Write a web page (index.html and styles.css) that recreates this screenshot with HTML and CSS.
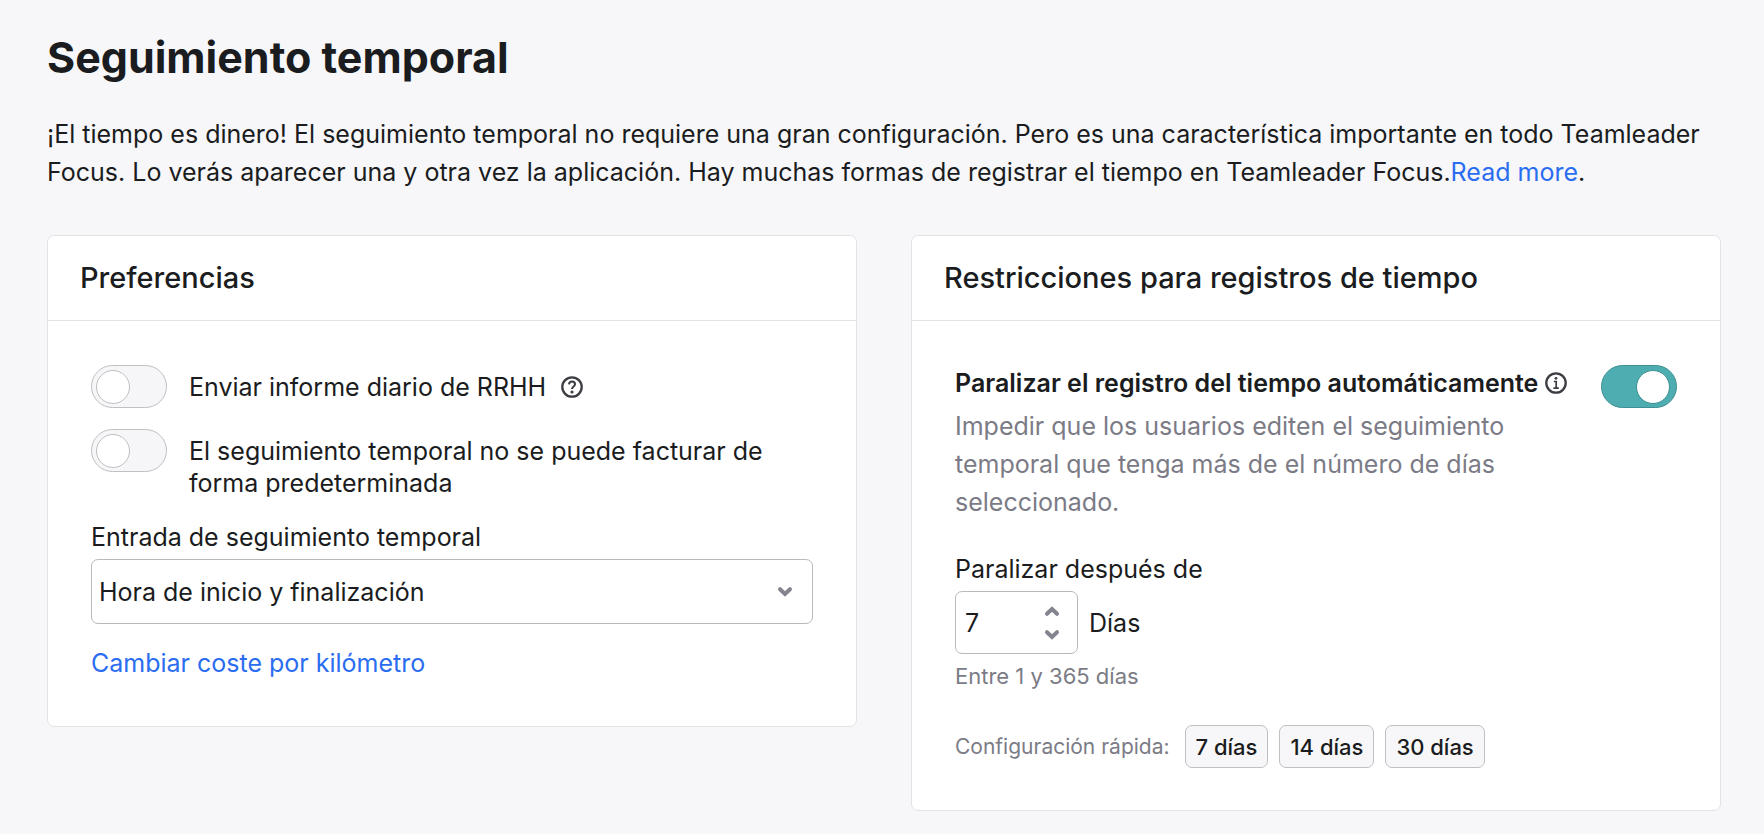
FILE: index.html
```html
<!DOCTYPE html>
<html lang="es">
<head>
	<meta charset="utf-8">
	<meta name="viewport" content="width=device-width, initial-scale=1">
	<title>Seguimiento temporal</title>
	<link rel="stylesheet" href="styles.css">
</head>
<body>
	<h1>Seguimiento temporal</h1>
	<p class="intro">¡El tiempo es dinero! El seguimiento temporal no requiere una gran configuración. Pero es una característica importante en todo Teamleader Focus. Lo verás aparecer una y otra vez la aplicación. Hay muchas formas de registrar el tiempo en Teamleader Focus.<a href="#">Read more</a>.</p>

	<main class="cards">
		<section class="card">
			<h2>Preferencias</h2>
			<div class="card-body">
				<div class="option">
					<input type="checkbox" class="toggle" id="report">
					<label for="report">Enviar informe diario de RRHH</label>
					<svg class="icon" viewBox="0 0 22 22" fill="none" stroke="currentColor" stroke-width="2.3">
						<circle cx="11" cy="11" r="9.7"/>
						<path d="M8 8.4C8.2 6.5 9.4 5.6 11 5.6c1.8 0 3 1 3 2.6 0 2.2-3 2.4-3 4.9" stroke-width="2"/>
						<circle cx="11" cy="16" r="1.6" fill="currentColor" stroke="none"/>
					</svg>
				</div>
				<div class="option">
					<input type="checkbox" class="toggle" id="billable">
					<label for="billable">El seguimiento temporal no se puede facturar de forma predeterminada</label>
				</div>

				<label class="field-label" for="entry">Entrada de seguimiento temporal</label>
				<div class="select">
					<select id="entry">
						<option>Hora de inicio y finalización</option>
						<option>Duración</option>
					</select>
					<svg class="chevron" viewBox="0 0 14 10"><path d="M2 2.2l5 4.8 5-4.8"/></svg>
				</div>

				<a class="cost-link" href="#">Cambiar coste por kilómetro</a>
			</div>
		</section>

		<section class="card">
			<h2>Restricciones para registros de tiempo</h2>
			<div class="card-body">
				<div class="lock">
					<div class="lock-text">
						<div class="lock-title">
							<label for="lock">Paralizar el registro del tiempo automáticamente</label>
							<svg class="icon" viewBox="0 0 22 22" fill="none" stroke="currentColor" stroke-width="2.3">
								<circle cx="11" cy="11" r="9.7"/>
								<path d="M8.8 9.5h2.4v6.6M8.4 16.2h5.4" stroke-width="1.7"/>
								<circle cx="11" cy="6.3" r="1.4" fill="currentColor" stroke="none"/>
							</svg>
						</div>
						<p>Impedir que los usuarios editen el seguimiento temporal que tenga más de el número de días seleccionado.</p>
					</div>
					<input type="checkbox" class="toggle" id="lock" checked>
				</div>

				<label class="field-label" for="days">Paralizar después de</label>
				<div class="days">
					<div class="number">
						<input type="number" id="days" value="7" min="1" max="365">
						<div class="steps">
							<button type="button" aria-label="Aumentar" onclick="days.stepUp()"><svg class="chevron" viewBox="0 0 14 10"><path d="M2 7.8L7 3l5 4.8"/></svg></button>
							<button type="button" aria-label="Disminuir" onclick="days.stepDown()"><svg class="chevron" viewBox="0 0 14 10"><path d="M2 2.2l5 4.8 5-4.8"/></svg></button>
						</div>
					</div>
					<span>Días</span>
				</div>
				<p class="hint">Entre 1 y 365 días</p>

				<div class="quick">
					<span>Configuración rápida:</span>
					<button type="button" onclick="days.value = 7">7 días</button>
					<button type="button" onclick="days.value = 14">14 días</button>
					<button type="button" onclick="days.value = 30">30 días</button>
				</div>
			</div>
		</section>
	</main>
</body>
</html>
```
FILE: styles.css
```css
* {
	box-sizing: border-box;
}

body {
	margin: 0;
	padding: 29px 43px 22px 47px;
	background: #f7f7fa;
	color: #1a1c20;
	font-family: Inter, "Liberation Sans", sans-serif;
	font-size: 25px;
	line-height: 32px;
}

h1, h2, p {
	margin: 0;
}

h1 {
	font-size: 43px;
	line-height: 56px;
	font-weight: 700;
	margin-bottom: 30px;
}

a {
	color: #2a6df0;
	text-decoration: none;
}

input, select, button {
	font: inherit;
	color: inherit;
}

.intro {
	line-height: 38px;
	margin-bottom: 44px;
}

.cards {
	display: grid;
	grid-template-columns: 1fr 1fr;
	gap: 54px;
	align-items: start;
}

.card {
	background: #fff;
	border: 1px solid #e3e3e6;
	border-radius: 7px;
}

.card h2 {
	padding: 0 32px;
	border-bottom: 1px solid #e3e3e6;
	font-size: 29px;
	line-height: 84px;
	font-weight: 500;
}

.card-body {
	padding: 44px 43px 42px;
}

/* toggles */

.toggle {
	appearance: none;
	flex: none;
	width: 76px;
	height: 43px;
	margin: 0;
	padding: 4px;
	background: #f6f6f9;
	border: 1px solid #c0c0c4;
	border-radius: 22px;
	cursor: pointer;
}

.toggle::before {
	content: "";
	display: block;
	width: 32px;
	height: 32px;
	background: #fff;
	border: 1px solid #c0c0c4;
	border-radius: 50%;
}

.toggle:checked {
	padding-right: 6px;
	background: #4dadb0;
	border-color: #3d8f92;
}

.toggle:checked::before {
	margin-left: auto;
	border-color: #3d8f92;
}

.option {
	display: flex;
	align-items: flex-start;
	margin-bottom: 21px;
}

.option label {
	padding: 6px 0 0 22px;
}

.icon {
	flex: none;
	width: 22px;
	height: 22px;
	color: #3c3d43;
}

.option .icon {
	margin: 11px 0 0 15px;
}

/* fields */

.field-label {
	display: block;
	margin-bottom: 6px;
}

.option + .field-label {
	margin-top: 22px;
}

.select {
	position: relative;
	margin-bottom: 23px;
}

.select select {
	appearance: none;
	display: block;
	width: 100%;
	height: 65px;
	padding: 0 50px 0 7px;
	background: #fff;
	border: 1px solid #b9b9bd;
	border-radius: 7px;
}

.chevron {
	display: block;
	width: 14px;
	height: 10px;
	overflow: visible;
	fill: none;
	stroke: #84848e;
	stroke-width: 4;
	stroke-linecap: round;
}

.select .chevron {
	position: absolute;
	top: 28px;
	right: 21px;
	pointer-events: none;
}

.cost-link {
	display: inline-block;
	margin-bottom: 5px;
}

.lock {
	display: flex;
	align-items: flex-start;
	gap: 26px;
	margin-bottom: 32px;
}

.lock-text {
	flex: 1;
}

.lock-title {
	display: flex;
	align-items: center;
	gap: 7px;
	margin-bottom: 6px;
	line-height: 36px;
	font-weight: 600;
	white-space: nowrap;
}

.lock-text p {
	line-height: 38px;
	color: #7b7b86;
}

.days {
	display: flex;
	align-items: center;
	gap: 11px;
}

.number {
	position: relative;
	width: 123px;
}

.number input {
	appearance: textfield;
	display: block;
	width: 100%;
	height: 63px;
	padding: 0 50px 0 9px;
	background: #fff;
	border: 1px solid #b9b9bd;
	border-radius: 7px;
}

.number input::-webkit-inner-spin-button {
	appearance: none;
}

.steps {
	position: absolute;
	top: 8px;
	right: 14px;
}

.steps button {
	display: block;
	padding: 7px 5px;
	background: none;
	border: 0;
}

.hint, .quick {
	line-height: 28px;
	color: #7b7b86;
}

.hint {
	margin: 8px 0 35px;
	font-size: 22px;
}

.quick {
	display: flex;
	align-items: center;
	gap: 11px;
	font-size: 21px;
}

.quick span {
	margin-right: 4px;
}

.quick button {
	height: 43px;
	padding: 0 10px;
	background: #f7f7fa;
	border: 1px solid #c0c0c4;
	border-radius: 7px;
	color: #1a1c20;
	font-size: 22px;
	font-weight: 500;
}
```
